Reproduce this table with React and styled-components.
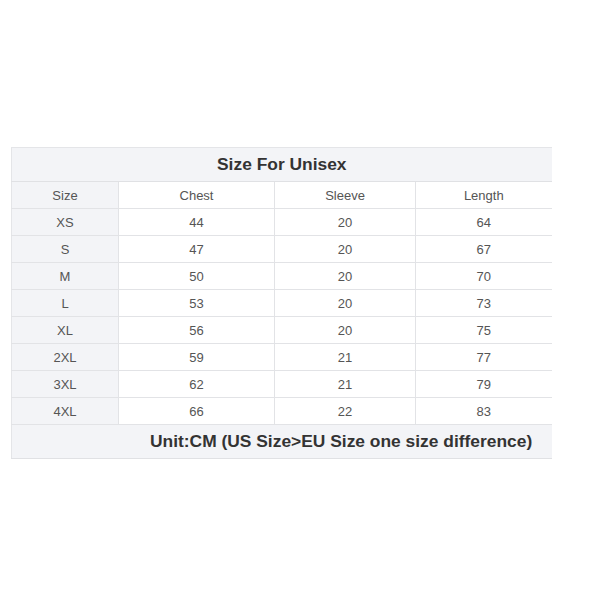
import React from "react"
import styled, { createGlobalStyle } from "styled-components"

const rows = [
  ["XS", 44, 20, 64],
  ["S", 47, 20, 67],
  ["M", 50, 20, 70],
  ["L", 53, 20, 73],
  ["XL", 56, 20, 75],
  ["2XL", 59, 21, 77],
  ["3XL", 62, 21, 79],
  ["4XL", 66, 22, 83],
]

const App = () => (
  <Page>
    <GlobalStyle />
    <SizeTable>
      <colgroup>
        <col style={{ width: 107 }} />
        <col style={{ width: 156 }} />
        <col style={{ width: 141 }} />
        <col style={{ width: 136 }} />
      </colgroup>
      <thead>
        <tr>
          <TitleCell colSpan={4}>Size For Unisex</TitleCell>
        </tr>
        <tr>
          <Cell $first>Size</Cell>
          <Cell>Chest</Cell>
          <Cell>Sleeve</Cell>
          <Cell $last>Length</Cell>
        </tr>
      </thead>
      <tbody>
        {rows.map(r => (
          <tr key={r[0]}>
            <Cell $first>{r[0]}</Cell>
            <Cell>{r[1]}</Cell>
            <Cell>{r[2]}</Cell>
            <Cell $last>{r[3]}</Cell>
          </tr>
        ))}
      </tbody>
      <tfoot>
        <tr>
          <FootCell colSpan={4}>Unit:CM (US Size&gt;EU Size one size difference)</FootCell>
        </tr>
      </tfoot>
    </SizeTable>
  </Page>
)

const GlobalStyle = createGlobalStyle`
  body {
    margin: 0;
    background: #ffffff;
    font-family: "Liberation Sans", Arial, sans-serif;
  }
`

const Page = styled.div`
  width: 600px;
  height: 600px;
  padding: 147px 0 0 11px;
  box-sizing: border-box;
`

const SizeTable = styled.table`
  width: 540px;
  border-collapse: collapse;
  table-layout: fixed;
  border-top: 1px solid #e4e5e8;
  border-left: 1px solid #e4e5e8;
`

const TitleCell = styled.th`
  height: 33px;
  padding: 0;
  background: #f3f4f7;
  color: #333333;
  font-size: 17.4px;
  font-weight: bold;
  text-align: center;
  border-bottom: 1px solid #e0e1e4;
`

const Cell = styled.td`
  height: 26px;
  padding: 0;
  text-align: center;
  font-size: 13px;
  color: #555555;
  background: ${p => (p.$first ? "#f3f4f7" : "#ffffff")};
  border-bottom: 1px solid #e2e3e6;
  border-right: ${p => (p.$last ? "none" : "1px solid #e2e3e6")};
`

const FootCell = styled.td`
  height: 33px;
  padding: 0 0 0 138px;
  background: #f3f4f7;
  color: #333333;
  font-size: 17.4px;
  font-weight: bold;
  text-align: left;
  white-space: nowrap;
  border-bottom: 1px solid #e0e1e4;
`

export default App
